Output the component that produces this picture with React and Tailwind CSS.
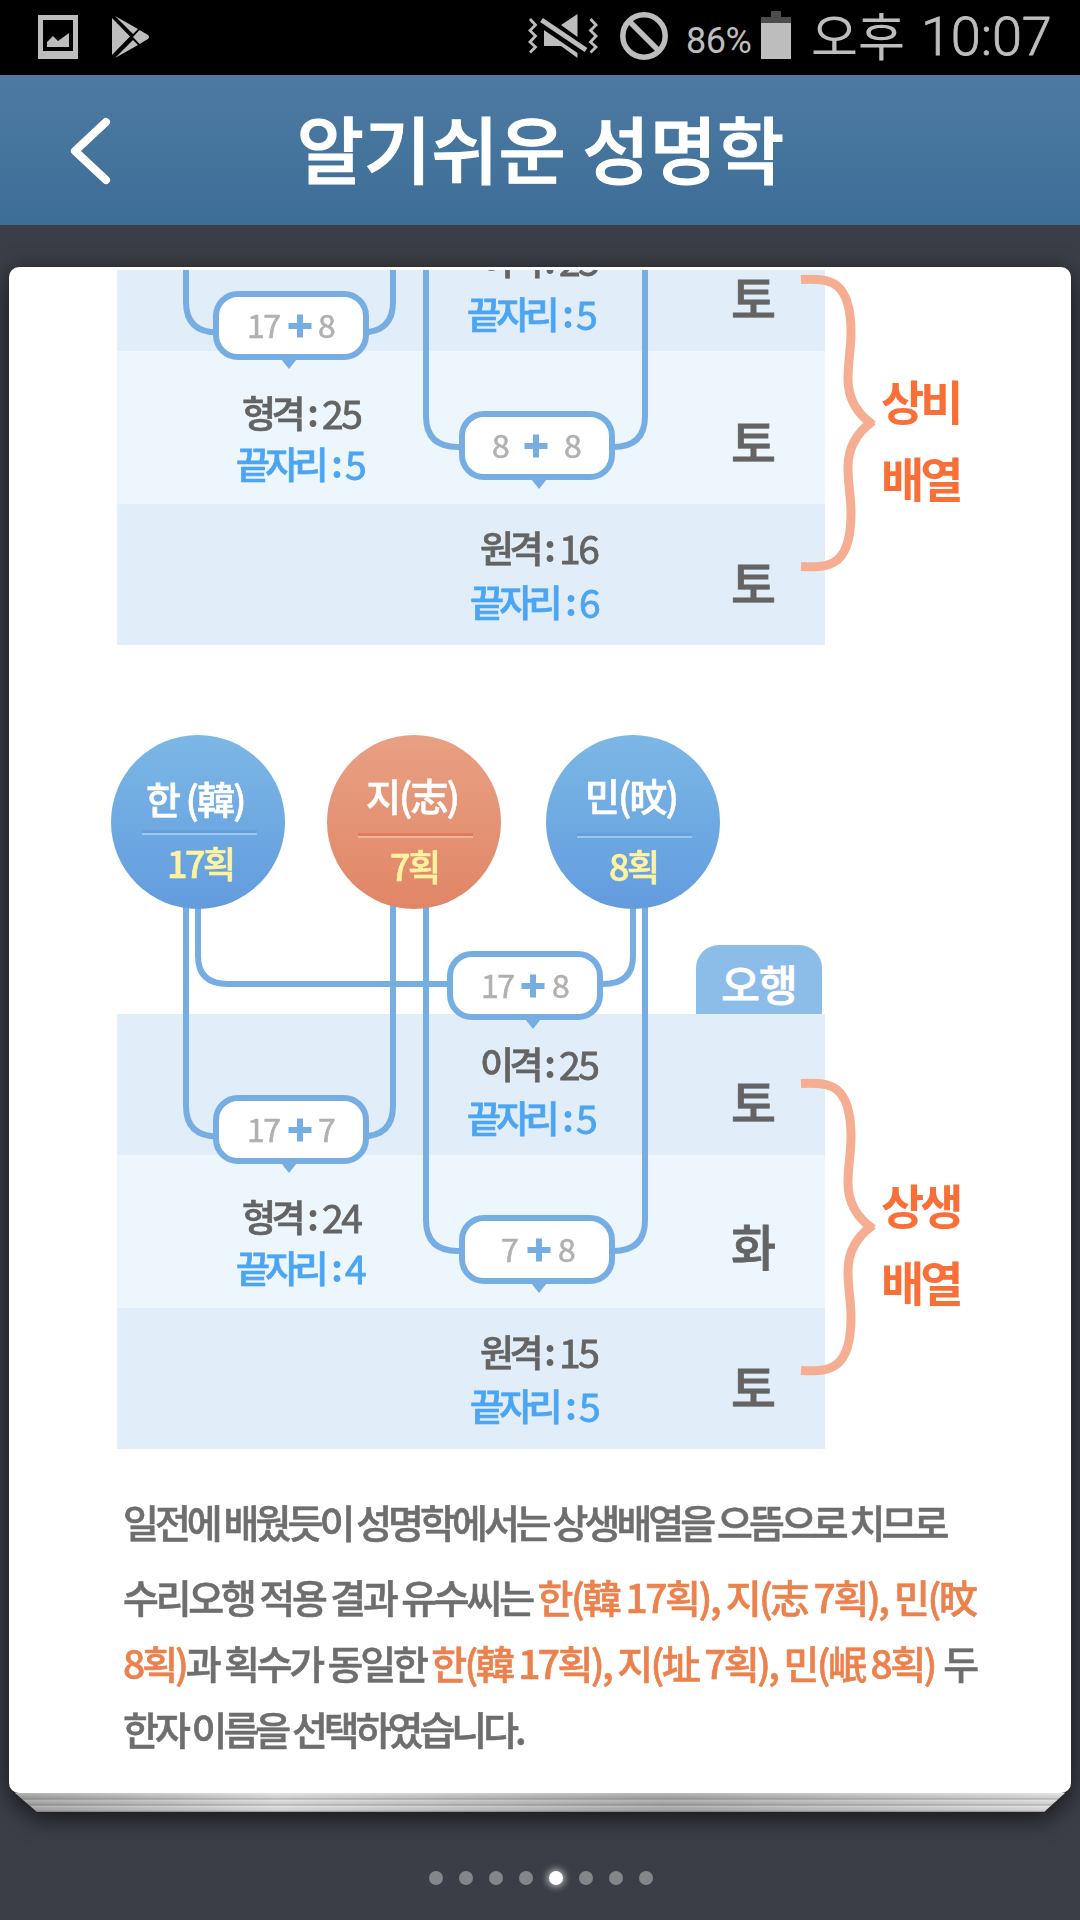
const KR = "font-['Noto_Sans_CJK_KR',sans-serif]";

/* A label on the diagram: left edge, vertical centre of its line box. */
function Label({ x, y, className, children }) {
  return (
    <span
      className={`absolute -translate-y-1/2 whitespace-pre leading-none ${className}`}
      style={{ left: x, top: y }}
    >
      {children}
    </span>
  );
}

function Circle({ x, warm, name, nameX, nameY, count, countX, countY, ruleX, ruleY }) {
  return (
    <div
      className={`absolute top-0 size-[174px] rounded-full bg-linear-to-b ${
        warm ? "from-[#e8a083] to-[#e18667]" : "from-[#7cb7e6] to-[#639cde]"
      }`}
      style={{ left: x }}
    >
      <Label x={nameX} y={nameY} className="text-[38px] font-medium tracking-[-2px] text-white [-webkit-text-stroke:0.6px]">{name}</Label>
      <div
        className={`absolute h-[5px] w-[115px] border-b-2 ${
          warm ? "border-[#f0b59d] bg-[#dd7b5a]" : "border-[#9cc7ee] bg-[#659fdd]"
        }`}
        style={{ left: ruleX, top: ruleY }}
      />
      <Label x={countX} y={countY} className="text-[36px] font-medium tracking-[-2.5px] text-[#fff2a0] [-webkit-text-stroke:0.6px]">{count}</Label>
    </div>
  );
}

function Pill({ x, y, arrow, left, leftX, plusX, right, rightX }) {
  return (
    <div
      className="absolute h-[69px] w-[156px] rounded-[25px] border-[6px] border-[#76aee4] bg-white text-[32px] text-[#b1b1b1] [-webkit-text-stroke:0.6px]"
      style={{ left: x, top: y }}
    >
      <Label x={leftX - 6} y={26.5} className="tracking-[-1.5px]">{left}</Label>
      <svg className="absolute top-[17px] size-[24px]" style={{ left: plusX - 7 }} viewBox="0 0 24 24">
        <path d="M0.5 12H23.5M12 0.5V23.5" stroke="#76aee4" strokeWidth="6" />
      </svg>
      <Label x={rightX - 6} y={26.5}>{right}</Label>
      <svg className="absolute top-[62px] h-[10px] w-[16px]" style={{ left: arrow - 14 }} viewBox="0 0 16 10">
        <path d="M0 0H16L8 10Z" fill="#76aee4" />
      </svg>
    </div>
  );
}

function Result({ x, y, colonX, valueX, name, value, blue }) {
  const tone = blue ? "text-[#4ba5f2]" : "text-[#646464]";
  return (
    <>
      <Label x={x} y={y} className={`text-[37px] font-medium [-webkit-text-stroke:0.7px] ${tone} ${blue ? "tracking-[-4.8px]" : "tracking-[-4.5px]"}`}>{name}</Label>
      <Label x={colonX} y={y - 1} className={`text-[37px] font-bold ${tone}`}>:</Label>
      <Label x={valueX} y={y} className={`text-[39px] tracking-[-2.5px] [-webkit-text-stroke:0.8px] ${tone}`}>{value}</Label>
    </>
  );
}

/* Name circles, the outer sum and the column tab that stand above the table. */
function DiagramHead({ sum }) {
  return (
    <>
      <div className="absolute left-[687px] top-[210px] flex h-[69px] w-[126px] items-center justify-center rounded-t-[23px] bg-[#8cbce8] pt-[5px] text-[42px] font-medium tracking-[-1px] text-white [-webkit-text-stroke:0.8px]">
        오행
      </div>
      <Circle x={102} name="한 (韓)" nameX={35} nameY={62.5} ruleX={31} ruleY={95} count="17획" countX={56} countY={127} />
      <Circle x={318} warm name="지(志)" nameX={39} nameY={60} ruleX={31} ruleY={98} count="7획" countX={63} countY={130} />
      <Circle x={537} name="민(旼)" nameX={39} nameY={60} ruleX={31} ruleY={98} count="8획" countX={63} countY={130} />
      <Pill x={438} y={216} arrow={86} {...sum} />
    </>
  );
}

function Diagram({ head, sums, results, elements, verdict }) {
  return (
    <div className="relative h-[714px] w-full shrink-0">
      <div className="flex flex-col pl-[108px] pt-[279px]">
        <div className="h-[141px] w-[708px] bg-[#e1edf9]" />
        <div className="h-[153px] w-[708px] bg-[#eef6fd]" />
        <div className="h-[141px] w-[708px] bg-[#e1edf9]" />
      </div>
      <svg className="absolute left-0 top-0 h-[714px] w-[1062px]" viewBox="9 735 1062 714" fill="none">
        <g stroke="#76aee4" strokeWidth="6">
          <path d="M198 880V956Q198 984 228 984H603Q633 984 633 956V880" />
          <path d="M186 880V1106Q186 1136.500 218 1136.500H361Q393 1136.500 393 1106V880" />
          <path d="M426 880V1220Q426 1251 458 1251H613Q645 1251 645 1220V880" />
        </g>
        <g stroke="#f6ae92" strokeWidth="9">
          <path d="M801 1083.500C830 1082 851 1084 851 1137C851 1154 848 1164 848 1183C848 1202 856 1217 873 1229" />
          <path d="M801 1370.500C830 1372 851 1370 851 1317C851 1300 848 1290 848 1271C848 1252 856 1237 873 1225" />
        </g>
      </svg>
      {head && <DiagramHead sum={head} />}
      <Pill x={204} y={360} arrow={76} {...sums[0]} />
      <Pill x={450} y={480} arrow={80} {...sums[1]} />
      <Result x={471} y={328} colonX={535} valueX={550} name="이격" value={results[0]} />
      <Result blue x={458} y={382} colonX={553} valueX={567} name="끝자리" value={results[1]} />
      <Result x={233} y={481} colonX={298} valueX={313} name="형격" value={results[2]} />
      <Result blue x={227} y={532} colonX={322} valueX={336} name="끝자리" value={results[3]} />
      <Result x={471} y={616} colonX={535} valueX={550} name="원격" value={results[4]} />
      <Result blue x={461} y={670} colonX={556} valueX={570} name="끝자리" value={results[5]} />
      <Label x={722} y={364.5} className="text-[49px] font-medium text-[#646464] [-webkit-text-stroke:0.8px]">{elements[0]}</Label>
      <Label x={722} y={508.5} className="text-[49px] font-medium text-[#646464] [-webkit-text-stroke:0.8px]">{elements[1]}</Label>
      <Label x={722} y={649.5} className="text-[49px] font-medium text-[#646464] [-webkit-text-stroke:0.8px]">{elements[2]}</Label>
      <Label x={872} y={467.5} className="text-[47px] font-bold tracking-[-4px] text-[#f86f38]">{verdict}</Label>
      <Label x={872} y={545} className="text-[47px] font-bold tracking-[-4px] text-[#f86f38]">배열</Label>
    </div>
  );
}

function StatusBar() {
  return (
    <div className="flex h-[75px] shrink-0 items-start bg-black text-[#bdbdbd]">
      <svg className="ml-[38px] mt-[15px] h-[44px] w-[40px]" viewBox="0 0 40 44">
        <path d="M0 0H40V44H0ZM5 5V36H35V5Z" fill="currentColor" fillRule="evenodd" />
        <path d="M9 32V27L15 21L20 26L31 18V32Z" fill="currentColor" />
      </svg>
      <svg className="ml-[33px] mt-[15px] h-[44px] w-[41px]" viewBox="0 0 41 44">
        <path d="M1 3V40L19 21.500ZM4 1L27 14L22 19ZM28.500 15L37 20Q39 22 37 24L28.500 29L22 22ZM4 43L22 25L27 30Z" fill="currentColor" />
      </svg>
      <svg className="ml-[376px] mt-[12px] h-[48px] w-[71px]" viewBox="0 0 71 48">
        <path d="M2 7L7.500 13L2 18.500L7.500 24L2 30L7.500 35L2 40.500M62.500 7L68 13L62.500 18.500L68 24L62.500 30L68 35L62.500 40.500" fill="none" stroke="currentColor" strokeWidth="2.800" />
        <path d="M16 17L49.500 38V46L33 34H16ZM33 13L49.500 2V25Z" fill="currentColor" />
        <path d="M11.500 12.500L54 41.500" stroke="black" strokeWidth="4" />
        <path d="M13.500 8L58 38" stroke="currentColor" strokeWidth="5" />
      </svg>
      <svg className="ml-[21px] mt-[12px] size-[48px]" viewBox="0 0 48 48" fill="none" stroke="currentColor" strokeWidth="5.500">
        <circle cx="24" cy="24" r="21.200" />
        <path d="M9 9L39 39" />
      </svg>
      <span className="ml-[18px] mt-[20px] w-[75px] whitespace-nowrap font-[Roboto,sans-serif] text-[36px] leading-[42px] tracking-[-0.5px]">86%</span>
      <svg className="mt-[11px] h-[48px] w-[30px]" viewBox="0 0 30 48">
        <path d="M10 0H20V6H30V12H0V6H10Z" fill="#4b4b4b" />
        <path d="M0 12H30V48H0Z" fill="currentColor" />
      </svg>
      <span className="ml-[20px] mt-[9px] w-[110px] whitespace-nowrap text-[51px] font-normal leading-[50px]">오후</span>
      <span className="mt-[12px] whitespace-nowrap font-[Roboto,sans-serif] text-[54px] font-light leading-[50px] tracking-[-0.1px] [-webkit-text-stroke:0.8px]">10:07</span>
    </div>
  );
}

function Header() {
  return (
    <header className="grid h-[150px] shrink-0 grid-cols-[1fr_auto_1fr] items-center bg-linear-to-b from-[#4d7aa3] to-[#3d6e97]">
      <svg className="ml-[70px] mt-[2px] h-[68px] w-[42px]" viewBox="0 0 42 68" fill="none" stroke="white" strokeWidth="8" strokeLinecap="round" strokeLinejoin="round">
        <path d="M36 5L5 34L36 63" />
      </svg>
      <h1 className="mb-[8px] pl-[1px] text-[73px] font-medium leading-none tracking-[0.1px] text-white [-webkit-text-stroke:1.2px]">알기쉬운 성명학</h1>
    </header>
  );
}

const Em = ({ children, className }) => <span className={`text-[#eb824e] ${className}`}>{children}</span>;

function Explanation() {
  return (
    <div className="ml-[114px] mt-[39px] flex w-[860px] flex-col whitespace-pre text-[39px] font-medium leading-[66px] text-[#6e6e6e] [-webkit-text-stroke:0.6px]">
      <p className="mb-[9px] tracking-[-3.95px]">일전에 배웠듯이 성명학에서는 상생배열을 으뜸으로 치므로</p>
      <p className="tracking-[-3.2px]">수리오행 적용 결과 유수씨는 <Em className="tracking-[-2.4px]">한(韓 17획), 지(志 7획), 민(旼</Em></p>
      <p className="tracking-[-3.2px]"><Em className="tracking-[-3.1px]">8획)</Em>과 획수가 동일한 <Em className="tracking-[-2.62px]">한(韓 17획), 지(址 7획), 민(岷 8획)</Em><span className="pl-[3px]"> 두</span></p>
      <p className="tracking-[-4px]">한자 이름을 선택하였습니다.</p>
    </div>
  );
}

function PageEdges() {
  return (
    <svg className="h-[19px] w-[1062px] shrink-0" viewBox="9 1792 1062 19">
      <defs>
        <linearGradient id="sheet" x1="0" x2="1" y1="0" y2="0">
          <stop offset="0" stopColor="#9d9d9d" />
          <stop offset="0.25" stopColor="#dedede" />
          <stop offset="0.62" stopColor="#a4a4a4" />
          <stop offset="1" stopColor="#e0e0e0" />
        </linearGradient>
        <linearGradient id="fold" x1="0" x2="0" y1="0" y2="1">
          <stop offset="0" stopColor="#fff" stopOpacity="0.25" />
          <stop offset="0.7" stopColor="#888" stopOpacity="0.15" />
          <stop offset="1" stopColor="#555" stopOpacity="0.55" />
        </linearGradient>
      </defs>
      <path d="M15 1792H1065L1044 1811H37Z" fill="url(#sheet)" />
      <path d="M15 1792H1065L1058 1798.500H22Z" fill="url(#fold)" />
      <path d="M22 1798.500H1058L1051 1804.500H30Z" fill="url(#fold)" />
      <path d="M30 1804.500H1051L1044 1811H37Z" fill="url(#fold)" />
    </svg>
  );
}

export default function App() {
  return (
    <div className={`flex h-[1920px] w-[1080px] flex-col overflow-hidden bg-[#3b3e46] ${KR}`}>
      <StatusBar />
      <Header />
      <main className="mx-[9px] mt-[42px] flex h-[1545px] shrink-0 flex-col drop-shadow-[0_6px_12px_rgba(0,0,0,0.65)]">
        <section className="h-[1526px] shrink-0 overflow-hidden rounded-[10px] bg-white pt-[3px]">
          <div className="h-[1520px] overflow-hidden">
            <div className="-mt-[339px] flex flex-col">
              <Diagram
                sums={[
                  { left: "17", leftX: 34, plusX: 76, right: "8", rightX: 105 },
                  { left: "8", leftX: 33, plusX: 66, right: "8", rightX: 105 },
                ]}
                results={["25", "5", "25", "5", "16", "6"]}
                elements={["토", "토", "토"]}
                verdict="상비"
              />
              <div className="mt-[90px]">
                <Diagram
                  head={{ left: "17", leftX: 34, plusX: 75, right: "8", rightX: 105 }}
                  sums={[
                    { left: "17", leftX: 34, plusX: 76, right: "7", rightX: 105 },
                    { left: "7", leftX: 42, plusX: 69, right: "8", rightX: 99 },
                  ]}
                  results={["25", "5", "24", "4", "15", "5"]}
                  elements={["토", "화", "토"]}
                  verdict="상생"
                />
              </div>
              <Explanation />
            </div>
          </div>
        </section>
        <PageEdges />
      </main>
      <nav className="mt-[59px] flex justify-center gap-[16px] pl-[2px]">
        {[0, 1, 2, 3, 4, 5, 6, 7].map((i) => (
          <span
            key={i}
            className={`size-[14px] rounded-full ${i === 4 ? "bg-white shadow-[0_0_7px_2px_rgba(255,255,255,0.6)]" : "bg-[#84878a]"}`}
          />
        ))}
      </nav>
    </div>
  );
}
